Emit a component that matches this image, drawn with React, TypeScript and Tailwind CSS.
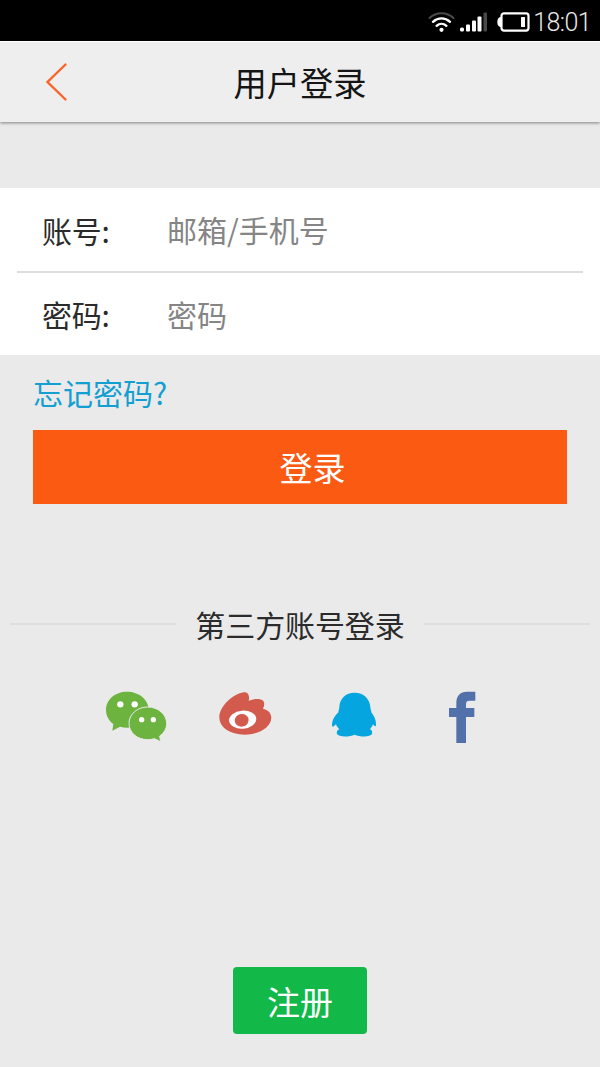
import type { ReactNode } from "react";

interface Field {
  id: string;
  label: string;
  placeholder: string;
  type: string;
}

const fields: Field[] = [
  { id: "account", label: "账号:", placeholder: "邮箱/手机号", type: "text" },
  { id: "password", label: "密码:", placeholder: "密码", type: "password" },
];

function StatusBar() {
  return (
    <div className="flex h-[41px] items-center justify-end bg-black pr-[9px] pt-[3px] text-[#e8e8e8]">
      <svg className="h-[22px] w-[27px]" viewBox="0 0 27 22" fill="none" strokeLinecap="round">
        <path d="M1.5 7C8.5 .6 18.5 .6 25.5 7" stroke="#4a4a4a" strokeWidth="2" />
        <path d="M5 10.8C10 6.2 17 6.2 22 10.8" stroke="#fff" strokeWidth="2.4" />
        <path d="M8.6 14.8C11.5 12.2 15.5 12.2 18.4 14.8" stroke="#fff" strokeWidth="2.4" />
        <circle cx="13.5" cy="18.8" r="2.1" fill="#fff" />
      </svg>
      <svg className="ml-[5px] h-[20px] w-[28px]" viewBox="0 0 28 20" fill="#fff">
        <rect x="0" y="15.5" width="4" height="4" rx="1.5" />
        <rect x="6" y="12.5" width="4" height="7" rx="1" />
        <rect x="12" y="8.5" width="4" height="11" rx="1" />
        <rect x="17.5" y="4.5" width="4" height="15" rx="1" />
        <rect x="23.5" y="0.5" width="3.5" height="19" rx="1" fill="#484848" />
      </svg>
      <svg className="ml-[9px] h-[20px] w-[33px]" viewBox="0 0 33 20" fill="none">
        <rect x="4.5" y="1.4" width="27" height="17.2" rx="2.5" stroke="#fff" strokeWidth="2.2" />
        <path d="M4 5C1.8 5 .3 6.5 .3 10S1.8 15 4 15z" fill="#fff" />
        <rect x="24" y="5" width="4" height="10" rx="0.5" fill="#fff" />
      </svg>
      <span className="ml-[3px] pt-px font-[Roboto] text-[25px] font-light leading-none tracking-[-0.6px]">18:01</span>
    </div>
  );
}

function SocialIcon({ label, children }: { label: string; children: ReactNode }) {
  return (
    <button aria-label={label} className="flex justify-center">
      <svg className="h-[54px] w-[66px]" viewBox="0 0 198 162">
        {children}
      </svg>
    </button>
  );
}

export default function App() {
  return (
    <div className="flex h-[1067px] w-[600px] flex-col bg-[#eaeaea] font-['Noto_Sans_CJK_SC',sans-serif] text-[#2b2b2b]">
      <StatusBar />

      <header className="grid h-[81px] grid-cols-[1fr_auto_1fr] items-center border-t border-white bg-[#eeeeee] shadow-[0_1px_3px_rgba(0,0,0,0.45)]">
        <button aria-label="返回" className="ml-[45px] w-[24px]">
          <svg className="h-[40px] w-[24px]" viewBox="0 0 24 40" fill="none">
            <path d="M20.5 2.5L2.5 20L20.5 37.5" stroke="#fa6428" strokeWidth="2.4" strokeLinecap="round" />
          </svg>
        </button>
        <h1 className="text-[33.3px] leading-none text-[#151515]">用户登录</h1>
      </header>

      <form className="mt-[66px] h-[167px] bg-white">
        {fields.map((field) => (
          <div
            key={field.id}
            className="mx-[17px] flex h-[85px] items-center border-b-2 border-[#dedede] pl-[25px] text-[30px] last:h-[82px] last:border-0"
          >
            <label htmlFor={field.id} className="w-[125px] leading-[40px] tracking-[-0.3px]">
              {field.label}
            </label>
            <input
              id={field.id}
              type={field.type}
              placeholder={field.placeholder}
              className="h-[44px] flex-1 outline-none placeholder:text-[#858585]"
            />
          </div>
        ))}
      </form>

      <div className="px-[33px]">
        <a href="#" className="mt-[18px] block h-[57px] text-[30px] leading-[39px] text-[#139fd2]">
          忘记密码?
        </a>
        <button className="h-[74px] w-full bg-[#fb5a13] pl-[25px] pt-[2px] text-[33px] text-white">登录</button>
      </div>

      <div className="mt-[100px] flex h-[40px] items-center gap-[19px] px-[10px] text-[30px] leading-[40px]">
        <span className="h-[2px] flex-1 bg-[#dedede]" />
        <span className="tracking-[-0.1px]">第三方账号登录</span>
        <span className="h-[2px] flex-1 bg-[#dedede]" />
      </div>

      <div className="mt-[46px] grid grid-cols-4 pl-[81px] pr-[83px]">
        <SocialIcon label="微信">
          <path
            fill="#6cb33f"
            d="M72 5C36 5 9 29 9 60C9 77 17 92 31 102L28 122L51 110C58 112 65 113 73 113C110 113 137 91 137 60C137 29 108 5 72 5Z"
          />
          <path
            fill="#6cb33f"
            stroke="#eaeaea"
            strokeWidth="3"
            d="M134 51C103 51 78 73 78 100C78 128 103 149 134 149C141 149 148 148 154 146L173 155L170 138C183 129 191 116 191 100C191 73 165 51 134 51Z"
          />
          <g fill="#fff">
            <circle cx="52" cy="43" r="9.5" />
            <circle cx="95" cy="43" r="9.5" />
            <circle cx="116" cy="89" r="8" />
            <circle cx="151" cy="89" r="8" />
          </g>
        </SocialIcon>
        <SocialIcon label="微博">
          <path
            fill="#d35b4e"
            d="M95 7C108 5 114 17 110 33C124 26 145 24 154 33C159 40 156 49 153 56C167 59 178 68 178 84C176 113 140 134 98 134C54 134 22 112 22 82C22 50 63 11 95 7Z"
          />
          <ellipse cx="92" cy="89" rx="41" ry="27" fill="#fff" transform="rotate(-5 92 89)" />
          <ellipse cx="89" cy="91" rx="21" ry="19" fill="#d35b4e" transform="rotate(-10 89 91)" />
        </SocialIcon>
        <SocialIcon label="QQ">
          <path
            fill="#05a5e0"
            d="M101 8C74 8 56 26 55 51C55 57 52 62 52 67C40 79 33 91 33 104C33 110 36 112 39 108L45 103C47 109 50 113 55 118C48 121 46 126 48 132C53 142 86 141 101 134C116 141 148 142 153 132C155 126 153 121 147 118C151 113 154 109 156 103L160 107C164 111 165 108 165 102C165 90 160 79 151 67C151 62 148 57 148 51C146 26 128 8 101 8Z"
          />
        </SocialIcon>
        <SocialIcon label="Facebook">
          <path
            fill="#5270aa"
            d="M136 5H111C90 5 79 18 79 39V54H57V81H79V159H108V81H133V54H108V43C108 35 111 32 119 32H136Z"
          />
        </SocialIcon>
      </div>

      <button className="mx-auto mt-[223px] h-[67px] w-[134px] rounded-[4px] bg-[#12b848] pt-[3px] text-[33px] text-white">
        注册
      </button>
    </div>
  );
}
